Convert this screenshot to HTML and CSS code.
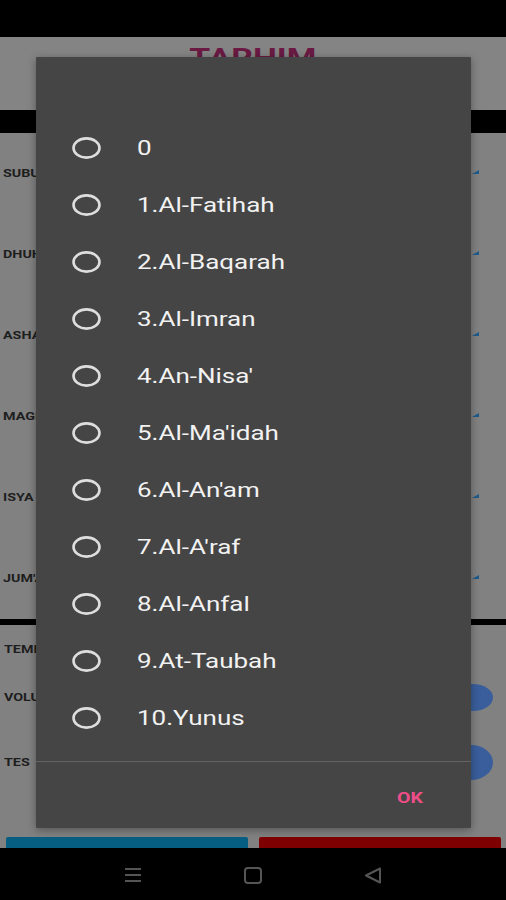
FILE: index.html
```html
<!DOCTYPE html>
<html>
<head>
<meta charset="utf-8">
<link rel="stylesheet" href="styles.css">
</head>
<body>
<div class="screen">
  <div class="status"></div>
  <div class="appbar"><span class="title">TARHIM</span></div>
  <div class="blackbar"></div>
  <div class="rows">
    <div class="row"><span class="lbl">SUBUH</span><span class="arrow"></span></div>
    <div class="row"><span class="lbl">DHUHUR</span><span class="arrow"></span></div>
    <div class="row"><span class="lbl">ASHAR</span><span class="arrow"></span></div>
    <div class="row"><span class="lbl">MAGHRIB</span><span class="arrow"></span></div>
    <div class="row"><span class="lbl">ISYA</span><span class="arrow"></span></div>
    <div class="row"><span class="lbl">JUM'AT</span><span class="arrow"></span></div>
  </div>
  <div class="sep"></div>
  <div class="lower">
    <div class="lrow r1"><span class="lbl">TEMPO</span></div>
    <div class="lrow r2"><span class="lbl">VOLUME</span><span class="thumb t1"></span></div>
    <div class="lrow r3"><span class="lbl">TES</span><span class="thumb t2"></span></div>
  </div>
  <div class="spacer"></div>
  <div class="buttons"><div class="btn blue"></div><div class="btn red"></div></div>
  <div class="nav">
    <svg class="navicon" width="18" height="16" viewBox="0 0 18 16"><path d="M1 2h16M1 8h16M1 14h16" stroke="#555" stroke-width="2" fill="none"/></svg>
    <svg class="navicon" width="18" height="17" viewBox="0 0 18 17"><rect x="1" y="1" width="16" height="15" rx="3" stroke="#555" stroke-width="2" fill="none"/></svg>
    <svg class="navicon" width="18" height="17" viewBox="0 0 18 17"><path d="M16 1.5 L2 8.5 L16 15.5 Z" stroke="#555" stroke-width="2" fill="none" stroke-linejoin="round"/></svg>
  </div>

  <div class="dialog">
    <div class="list">
      <div class="item"><svg class="radio" width="29" height="22" viewBox="0 0 29 22"><ellipse cx="14.5" cy="11" rx="13" ry="9.6"/></svg><span class="txt">0</span></div>
      <div class="item"><svg class="radio" width="29" height="22" viewBox="0 0 29 22"><ellipse cx="14.5" cy="11" rx="13" ry="9.6"/></svg><span class="txt">1.Al-Fatihah</span></div>
      <div class="item"><svg class="radio" width="29" height="22" viewBox="0 0 29 22"><ellipse cx="14.5" cy="11" rx="13" ry="9.6"/></svg><span class="txt">2.Al-Baqarah</span></div>
      <div class="item"><svg class="radio" width="29" height="22" viewBox="0 0 29 22"><ellipse cx="14.5" cy="11" rx="13" ry="9.6"/></svg><span class="txt">3.Al-Imran</span></div>
      <div class="item"><svg class="radio" width="29" height="22" viewBox="0 0 29 22"><ellipse cx="14.5" cy="11" rx="13" ry="9.6"/></svg><span class="txt">4.An-Nisa'</span></div>
      <div class="item"><svg class="radio" width="29" height="22" viewBox="0 0 29 22"><ellipse cx="14.5" cy="11" rx="13" ry="9.6"/></svg><span class="txt">5.Al-Ma'idah</span></div>
      <div class="item"><svg class="radio" width="29" height="22" viewBox="0 0 29 22"><ellipse cx="14.5" cy="11" rx="13" ry="9.6"/></svg><span class="txt">6.Al-An'am</span></div>
      <div class="item"><svg class="radio" width="29" height="22" viewBox="0 0 29 22"><ellipse cx="14.5" cy="11" rx="13" ry="9.6"/></svg><span class="txt">7.Al-A'raf</span></div>
      <div class="item"><svg class="radio" width="29" height="22" viewBox="0 0 29 22"><ellipse cx="14.5" cy="11" rx="13" ry="9.6"/></svg><span class="txt">8.Al-Anfal</span></div>
      <div class="item"><svg class="radio" width="29" height="22" viewBox="0 0 29 22"><ellipse cx="14.5" cy="11" rx="13" ry="9.6"/></svg><span class="txt">9.At-Taubah</span></div>
      <div class="item"><svg class="radio" width="29" height="22" viewBox="0 0 29 22"><ellipse cx="14.5" cy="11" rx="13" ry="9.6"/></svg><span class="txt">10.Yunus</span></div>
      <div class="item"><svg class="radio" width="29" height="22" viewBox="0 0 29 22"><ellipse cx="14.5" cy="11" rx="13" ry="9.6"/></svg></div>
    </div>
    <div class="actions"><span class="ok">OK</span></div>
  </div>
</div>
</body>
</html>
```
FILE: styles.css
```css
* { box-sizing: border-box; }
html, body { margin: 0; padding: 0; }
body { background: #000; font-family: Roboto, "Liberation Sans", sans-serif; }
.screen { position: relative; width: 506px; height: 900px; overflow: hidden; display: flex; flex-direction: column; background: #818181; }
.status { height: 37px; background: #000; flex: none; }
.appbar { height: 73px; flex: none; display: flex; justify-content: center; padding-top: 8px; background: #848484; }
.title { display: inline-block; font-size: 26px; line-height: 26px; font-weight: bold; color: #6a1a43; transform: scaleX(1.3); height: 26px; }
.blackbar { height: 23px; background: #000; flex: none; }
.rows { flex: none; display: flex; flex-direction: column; }
.row { height: 81px; display: flex; align-items: center; justify-content: space-between; padding: 0 27px 0 3px; }
.lbl { display: inline-block; font-size: 11px; font-weight: bold; color: #1e1e1e; transform: scaleX(1.3); transform-origin: left center; }
.arrow { width: 0; height: 0; border-left: 7px solid transparent; border-bottom: 4px solid #1d5b8c; margin-top: -4px; }
.sep { height: 6px; background: #000; flex: none; }
.lower { flex: none; display: flex; flex-direction: column; }
.lrow { display: flex; align-items: center; justify-content: space-between; padding: 0 13px 0 4px; }
.r1 { height: 48px; }
.r2 { height: 48px; }
.r3 { height: 82px; }
.thumb { display: block; background: #3a5e9c; border-radius: 50%; }
.t1 { width: 40px; height: 27px; }
.t2 { width: 44px; height: 35px; }
.spacer { height: 34px; flex: none; }
.buttons { height: 11px; flex: none; display: flex; gap: 11px; padding: 0 5px 0 6px; }
.btn { flex: 1; border-radius: 2px 2px 0 0; }
.blue { background: #065f82; }
.red { background: #7f0000; }
.nav { height: 52px; flex: none; background: #000; display: flex; justify-content: center; align-items: center; gap: 102px; padding-top: 2px; }
.navicon { display: block; }

.dialog { position: absolute; left: 36px; top: 57px; width: 435px; height: 771px; background: #454545; box-shadow: 0 2px 8px rgba(0,0,0,0.35); display: flex; flex-direction: column; border-radius: 1px; }
.list { height: 705px; overflow: hidden; padding-top: 62px; border-bottom: 1px solid #636363; flex: none; }
.item { height: 57px; display: flex; align-items: center; padding-left: 36px; }
.radio { display: block; flex: none; }
.radio ellipse { fill: none; stroke: #dedede; stroke-width: 2.6; }
.txt { display: inline-block; margin-left: 36px; font-size: 20px; color: #f2f2f2; transform: scaleX(1.3); transform-origin: left center; white-space: nowrap; }
.actions { flex: 1; display: flex; justify-content: flex-end; align-items: center; padding-right: 48px; padding-top: 6px; }
.ok { display: inline-block; font-size: 15px; font-weight: bold; color: #ee4d88; transform: scaleX(1.3); transform-origin: right center; }
```
